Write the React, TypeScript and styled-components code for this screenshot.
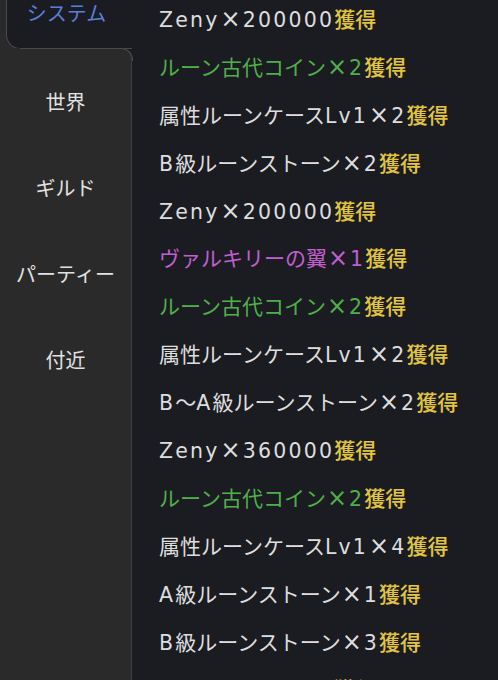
import React from "react";
import styled, { createGlobalStyle } from "styled-components";

const Global = createGlobalStyle`
  html, body { margin: 0; padding: 0; background: #1b1c21; }
  body { font-family: "Noto Sans CJK JP", "Noto Sans", sans-serif; overflow: hidden; }
`;

const Page = styled.div`
  display: flex;
  width: 498px;
  height: 680px;
  overflow: hidden;
  background: #1b1c21;
`;

const Sidebar = styled.div`
  width: 132px;
  flex-shrink: 0;
  display: flex;
  flex-direction: column;
  background: #1b1c21;
`;

const ActiveWrap = styled.div`
  background: #2a2a2a;
  padding-left: 6px;
`;

const ActiveTab = styled.div`
  height: 49px;
  box-sizing: border-box;
  background: #1b1c21;
  border-left: 1.5px solid #4a4a4c;
  border-bottom: 1.5px solid #4a4a4c;
  border-bottom-left-radius: 14px;
  display: flex;
  justify-content: center;
  align-items: flex-start;
  padding-right: 6px;
  color: #5a7fdb;
  font-size: 20px;
  line-height: 24px;
`;

const TabLabel = styled.span`
  margin-top: 1px;
`;

const Rest = styled.div`
  flex: 1;
  background: #2a2a2a;
  border-right: 1.5px solid #3e3e40;
  border-top-right-radius: 12px;
  margin-top: -1.5px;
  padding-top: 11px;
  display: flex;
  flex-direction: column;
  position: relative;
  &::before {
    content: "";
    position: absolute;
    top: 0;
    left: 20px;
    right: -1.5px;
    height: 12px;
    border-top: 1.5px solid #4a4a4c;
    border-right: 1.5px solid #4a4a4c;
    border-top-right-radius: 12px;
    pointer-events: none;
  }
`;

const TabItem = styled.div`
  height: 86px;
  display: flex;
  align-items: center;
  justify-content: center;
  color: #e2e2e2;
  font-size: 20px;
`;

const Content = styled.div`
  flex: 1;
  padding-left: 27px;
  margin-top: -6px;
  display: flex;
  flex-direction: column;
`;

const Row = styled.div`
  height: 47.9px;
  flex-shrink: 0;
  display: flex;
  align-items: center;
  font-size: 21px;
  white-space: nowrap;
`;

const Item = styled.span<{ $c: string }>`
  color: ${(p) => p.$c};
`;

const Latin = styled.span`
  font-family: "DejaVu Sans", "Noto Sans CJK JP", sans-serif;
  letter-spacing: 2.2px;
  font-size: 20.5px;
`;

const Cross = styled.span`
  font-family: "DejaVu Sans", sans-serif;
  font-size: 24px;
  line-height: 1;
  margin: 0 2px 0 1px;
`;

const Gain = styled.span`
  color: #e2c53f;
  font-weight: 500;
`;

const WHITE = "#dedede";
const GREEN = "#4fb04a";
const PURPLE = "#c15fd1";

const rows: [string, string][] = [
  ["Zeny×200000", WHITE],
  ["ルーン古代コイン×2", GREEN],
  ["属性ルーンケースLv1×2", WHITE],
  ["B級ルーンストーン×2", WHITE],
  ["Zeny×200000", WHITE],
  ["ヴァルキリーの翼×1", PURPLE],
  ["ルーン古代コイン×2", GREEN],
  ["属性ルーンケースLv1×2", WHITE],
  ["B～A級ルーンストーン×2", WHITE],
  ["Zeny×360000", WHITE],
  ["ルーン古代コイン×2", GREEN],
  ["属性ルーンケースLv1×4", WHITE],
  ["A級ルーンストーン×1", WHITE],
  ["B級ルーンストーン×3", WHITE],
  ["Zeny×360000", WHITE],
];

const tabs = ["世界", "ギルド", "パーティー", "付近"];

function renderText(t: string) {
  return t.split(/([A-Za-z0-9]+|×)/).map((seg, i) => {
    if (seg === "×") return <Cross key={i}>×</Cross>;
    if (/^[A-Za-z0-9]+$/.test(seg)) return <Latin key={i}>{seg}</Latin>;
    return seg;
  });
}

export default function App() {
  return (
    <Page>
      <Global />
      <Sidebar>
        <ActiveWrap>
          <ActiveTab>
            <TabLabel>システム</TabLabel>
          </ActiveTab>
        </ActiveWrap>
        <Rest>
          {tabs.map((t) => (
            <TabItem key={t}>{t}</TabItem>
          ))}
        </Rest>
      </Sidebar>
      <Content>
        {rows.map(([t, c], i) => (
          <Row key={i}>
            <Item $c={c}>{renderText(t)}</Item>
            <Gain>獲得</Gain>
          </Row>
        ))}
      </Content>
    </Page>
  );
}
